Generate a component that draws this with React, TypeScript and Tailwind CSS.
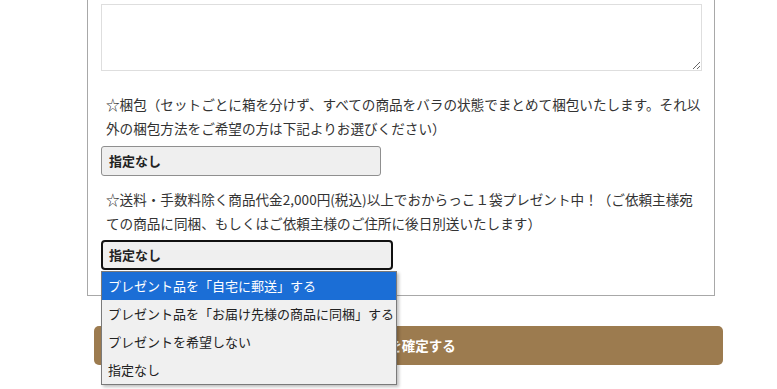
const FONT = { fontFamily: '"Noto Sans CJK JP", "Noto Sans", sans-serif' };

const presentOptions = [
  "プレゼント品を「自宅に郵送」する",
  "プレゼント品を「お届け先様の商品に同梱」する",
  "プレゼントを希望しない",
  "指定なし",
];

function Note({ lines }: { lines: string[] }) {
  return (
    <p className="pl-[5px] text-[13.6px] leading-[24px] text-[#333] whitespace-nowrap">
      {lines.map((l) => (
        <span key={l} className="block">
          {l}
        </span>
      ))}
    </p>
  );
}

export default function App() {
  return (
    <div className="relative h-[389px] w-[777px] overflow-hidden bg-white" style={FONT}>
      <div className="ml-[87px] w-[628px] border-x border-b border-[#a8a8a8] px-[13px] pt-[4px] pb-[25px]">
        <textarea className="block h-[67px] w-[601px] border border-[#dedede] bg-white" />

        <div className="mt-[21px]">
          <Note
            lines={[
              "☆梱包（セットごとに箱を分けず、すべての商品をバラの状態でまとめて梱包いたします。それ以",
              "外の梱包方法をご希望の方は下記よりお選びください）",
            ]}
          />
        </div>
        <div className="mt-[6px] flex h-[30px] w-[280px] items-center rounded-[3px] border border-[#8f8f8f] bg-[#efefef] px-[7px] text-[13px] font-bold text-[#222]">
          指定なし
        </div>

        <div className="mt-[11px]">
          <Note
            lines={[
              "☆送料・手数料除く商品代金2,000円(税込)以上でおからっこ１袋プレゼント中！（ご依頼主様宛",
              "ての商品に同梱、もしくはご依頼主様のご住所に後日別送いたします）",
            ]}
          />
        </div>
        <div className="relative mt-[5px] w-[292px]">
          <div className="flex h-[30px] w-[292px] items-center rounded-[4px] border-2 border-[#111] bg-[#efefef] px-[6px] text-[13px] font-bold text-[#222]">
            指定なし
          </div>
          <ul className="absolute left-0 top-[31px] z-10 w-[296px] border border-[#7a7a7a] bg-[#f0f0f0] text-[13px] text-[#222] shadow-[2px_2px_3px_rgba(0,0,0,0.25)]">
            {presentOptions.map((o, i) => (
              <li
                key={o}
                className={`flex h-[28px] items-center whitespace-nowrap px-[6px] ${
                  i === 0 ? "bg-[#1b6ed6] text-white" : ""
                }`}
              >
                {o}
              </li>
            ))}
          </ul>
        </div>
      </div>

      <button className="ml-[94px] mt-[30px] flex h-[39px] w-[629px] items-center justify-center rounded-[5px] bg-[#9c7b4f] text-[13.5px] font-bold text-white">
        注文を確定する
      </button>
    </div>
  );
}
